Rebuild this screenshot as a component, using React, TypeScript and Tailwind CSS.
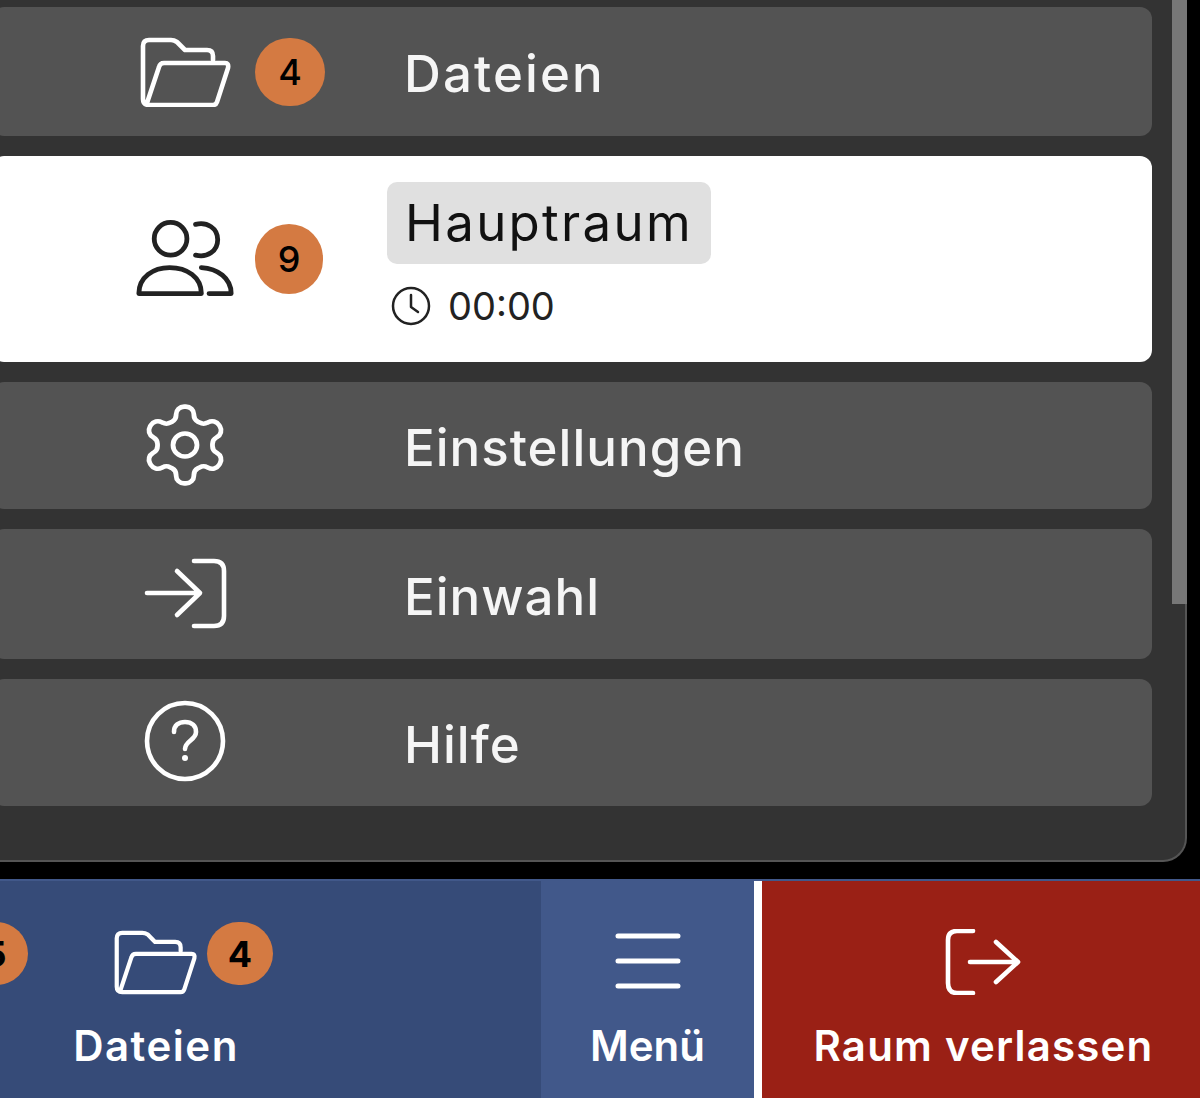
import React from "react";

const font = { fontFamily: '"Inter", "Noto Sans", sans-serif' };

function FolderIcon({ className }: { className: string }) {
  return (
    <svg viewBox="0 0 92 70" className={className} fill="none" stroke="currentColor" strokeWidth="4.6" strokeLinecap="round" strokeLinejoin="round">
      <path d="M73 23V19Q73 13 67 13H45L37 5Q34 3 31 3H9Q3 3 3 9V62Q3 68 9 68H73Q76 68 77 65L88 31Q89 26 85 26H24Q20 26 19 30L7 66" />
    </svg>
  );
}

function UsersIcon() {
  return (
    <svg viewBox="0 0 104 84" className="h-[84px] w-[104px] -translate-y-[1px] text-[#222]" fill="none" stroke="currentColor" strokeWidth="5" strokeLinecap="round" strokeLinejoin="round">
      <circle cx="37" cy="22" r="17" />
      <path d="M63 7C75 4 86 11 86 23C86 35 75 42 63 39" />
      <path d="M4 79C4 62 19 52 36 52C54 52 69 62 69 79Z" />
      <path d="M69 52C86 53 100 63 100 79H77" />
    </svg>
  );
}

function GearIcon() {
  return (
    <svg viewBox="0 0 24 24" preserveAspectRatio="none" className="h-[92px] w-[96px] -translate-y-[1px] text-white" fill="none" stroke="currentColor" strokeWidth="1.2" strokeLinecap="round" strokeLinejoin="round">
      <path d="M12.22 2h-.44a2 2 0 0 0-2 2v.18a2 2 0 0 1-1 1.73l-.43.25a2 2 0 0 1-2 0l-.15-.08a2 2 0 0 0-2.73.73l-.22.38a2 2 0 0 0 .73 2.73l.15.1a2 2 0 0 1 1 1.72v.51a2 2 0 0 1-1 1.74l-.15.09a2 2 0 0 0-.73 2.73l.22.38a2 2 0 0 0 2.73.73l.15-.08a2 2 0 0 1 2 0l.43.25a2 2 0 0 1 1 1.73V20a2 2 0 0 0 2 2h.44a2 2 0 0 0 2-2v-.18a2 2 0 0 1 1-1.73l.43-.25a2 2 0 0 1 2 0l.15.08a2 2 0 0 0 2.73-.73l.22-.39a2 2 0 0 0-.73-2.73l-.15-.08a2 2 0 0 1-1-1.74v-.5a2 2 0 0 1 1-1.74l.15-.09a2 2 0 0 0 .73-2.73l-.22-.38a2 2 0 0 0-2.73-.73l-.15.08a2 2 0 0 1-2 0l-.43-.25a2 2 0 0 1-1-1.73V4a2 2 0 0 0-2-2z" />
      <circle cx="12" cy="12" r="3" />
    </svg>
  );
}

function LoginIcon() {
  return (
    <svg viewBox="0 0 84 72" className="h-[72px] w-[84px] text-white" fill="none" stroke="currentColor" strokeWidth="4.6" strokeLinecap="round" strokeLinejoin="round">
      <path d="M4 35H57M34 13L57 35L34 57" />
      <path d="M51 3H71Q81 3 81 13V58Q81 68 71 68H51" />
    </svg>
  );
}

function HelpIcon() {
  return (
    <svg viewBox="0 0 84 84" className="h-[84px] w-[84px] -translate-y-[2px] text-white" fill="none" stroke="currentColor" strokeWidth="4.6" strokeLinecap="round" strokeLinejoin="round">
      <circle cx="42" cy="42" r="38" />
      <path d="M31 33C31 26 36 23 42 23C49 23 53 27 53 33C53 41 42 42 42 50" />
      <circle cx="42" cy="59" r="3" fill="currentColor" stroke="none" />
    </svg>
  );
}

function ClockIcon() {
  return (
    <svg viewBox="0 0 40 40" className="h-[40px] w-[40px] text-[#222]" fill="none" stroke="currentColor" strokeWidth="2.5" strokeLinecap="round" strokeLinejoin="round">
      <circle cx="20" cy="20" r="18" />
      <path d="M20 9V21L27 26" />
    </svg>
  );
}

function MenuIcon() {
  return (
    <svg viewBox="0 0 66 56" className="h-[56px] w-[66px] text-white" fill="none" stroke="currentColor" strokeWidth="5" strokeLinecap="round">
      <path d="M3 3H63M3 28H63M3 53H63" />
    </svg>
  );
}

function LogoutIcon() {
  return (
    <svg viewBox="0 0 78 66" className="h-[66px] w-[78px] text-white" fill="none" stroke="currentColor" strokeWidth="4.6" strokeLinecap="round" strokeLinejoin="round">
      <path d="M28 2H12Q3 2 3 11V54Q3 64 12 64H28" />
      <path d="M25 33H73M51 13L73 33L51 53" />
    </svg>
  );
}

function Badge({ n, className }: { n: string; className: string }) {
  return (
    <span className={`flex items-center justify-center rounded-full bg-[#d47a42] text-black ${className}`}>{n}</span>
  );
}

function Row({ icon, label, h }: { icon: React.ReactNode; label: string; h: string }) {
  return (
    <div className={`flex items-center rounded-[12px] bg-[#535353] pl-[143px] ${h}`}>
      <div className="flex w-[100px] shrink-0 items-center justify-center">{icon}</div>
      <div className="ml-[20px] w-[70px] shrink-0" />
      <span className="ml-[79px] pt-[4px] text-[51px] font-medium leading-none tracking-[1px] text-[#f5f5f5]">{label}</span>
    </div>
  );
}

export default function App() {
  return (
    <div className="flex h-[1098px] w-[1200px] flex-col overflow-hidden bg-black" style={font}>
      <div className="mr-[13px] flex h-[862px] shrink-0 rounded-br-[24px] border-r-[2px] border-b-[2px] border-[#555] bg-[#333]">
        <div className="flex flex-1 flex-col gap-[20px] pt-[7px]">
          <div className="-ml-[8px] mr-[20px] flex flex-col gap-[20px]">
            <div className="flex h-[129px] items-center rounded-[12px] bg-[#535353] pl-[143px]">
              <div className="flex w-[100px] shrink-0 items-center justify-center"><FolderIcon className="h-[70px] w-[92px] translate-x-[1px] text-white" /></div>
              <Badge n="4" className="ml-[20px] h-[68px] w-[70px] shrink-0 text-[36px] font-medium" />
              <span className="ml-[79px] pt-[4px] text-[51px] font-medium leading-none tracking-[2.1px] text-[#f5f5f5]">Dateien</span>
            </div>
            <div className="flex h-[206px] items-center rounded-[12px] bg-white pl-[143px]">
              <div className="flex w-[100px] shrink-0 items-center justify-center"><UsersIcon /></div>
              <Badge n="9" className="ml-[20px] h-[70px] w-[68px] shrink-0 text-[36px] font-medium" />
              <div className="mb-[10px] ml-[64px] flex flex-col items-start">
                <span className="rounded-[10px] bg-[#e0e0e0] px-[18px] py-[16px] text-[51px] leading-[50px] tracking-[2.3px] text-[#111]">Hauptraum</span>
                <div className="ml-[4px] mt-[22px] flex items-center gap-[17px] text-[#222]">
                  <ClockIcon />
                  <span className="text-[38px] leading-none">00:00</span>
                </div>
              </div>
            </div>
            <Row h="h-[127px]" icon={<GearIcon />} label="Einstellungen" />
            <Row h="h-[130px]" icon={<LoginIcon />} label="Einwahl" />
            <Row h="h-[127px]" icon={<HelpIcon />} label="Hilfe" />
          </div>
        </div>
        <div className="-mr-[2px] w-[15px] shrink-0 self-start">
          <div className="h-[604px] w-full bg-[#777]" />
        </div>
      </div>

      <div className="mt-[17px] flex flex-1 border-t-2 border-[#41588a] text-white">
        <div className="relative flex w-[541px] shrink-0 bg-[#364b78]">
          <Badge n="5" className="absolute -left-[38px] top-[41px] h-[63px] w-[66px] text-[36px] font-bold" />
          <div className="relative ml-[56px] flex w-[200px] flex-col items-center pt-[48px]">
            <FolderIcon className="h-[66px] w-[84px] text-white" />
            <span className="mt-[30px] text-[42px] font-semibold leading-none tracking-[1.5px]">Dateien</span>
            <Badge n="4" className="absolute left-[151px] top-[41px] h-[63px] w-[66px] text-[36px] font-bold" />
          </div>
        </div>
        <div className="flex w-[213px] shrink-0 flex-col items-center bg-[#41588a] pt-[52px]">
          <MenuIcon />
          <span className="mt-[36px] text-[42px] font-semibold leading-none">Menü</span>
        </div>
        <div className="w-[8px] shrink-0 bg-white" />
        <div className="flex flex-1 flex-col items-center bg-[#9a2015] pl-[5px] pt-[48px]">
          <LogoutIcon />
          <span className="mt-[30px] text-[42px] font-semibold leading-none tracking-[1.2px]">Raum verlassen</span>
        </div>
      </div>
    </div>
  );
}
